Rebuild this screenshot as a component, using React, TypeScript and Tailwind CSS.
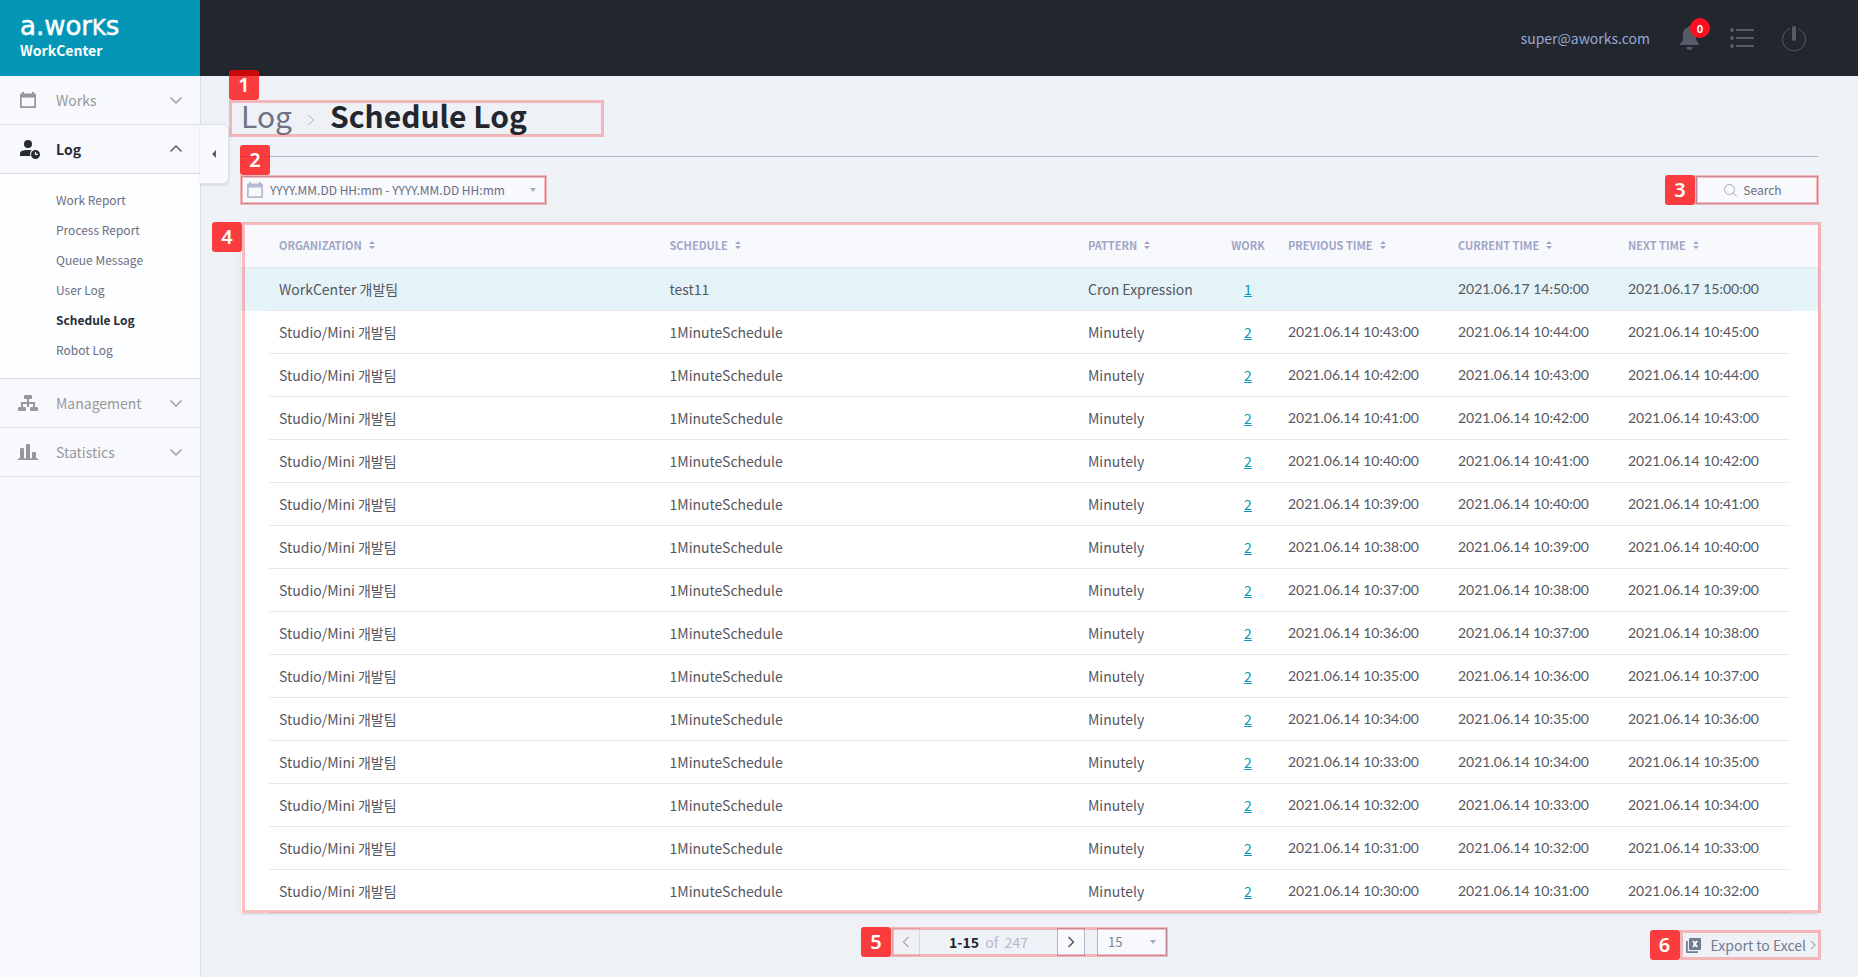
import React, { useState } from 'react';
import clsx from 'clsx';

interface ScheduleLog {
  organization: string;
  schedule: string;
  pattern: string;
  work: number;
  previous: string;
  current: string;
  next: string;
}

const minuteTime = (minute: number) => `2021.06.14 10:${minute}:00`;

const LOGS: ScheduleLog[] = [
  {
    organization: 'WorkCenter 개발팀',
    schedule: 'test11',
    pattern: 'Cron Expression',
    work: 1,
    previous: '',
    current: '2021.06.17 14:50:00',
    next: '2021.06.17 15:00:00',
  },
  ...Array.from({ length: 14 }, (_, i) => ({
    organization: 'Studio/Mini 개발팀',
    schedule: '1MinuteSchedule',
    pattern: 'Minutely',
    work: 2,
    previous: minuteTime(43 - i),
    current: minuteTime(44 - i),
    next: minuteTime(45 - i),
  })),
];

const LOG_PAGES = ['Work Report', 'Process Report', 'Queue Message', 'User Log', 'Schedule Log', 'Robot Log'];

const COLUMNS = [
  { label: 'ORGANIZATION', sortable: true },
  { label: 'SCHEDULE', sortable: true },
  { label: 'PATTERN', sortable: true },
  { label: 'WORK', sortable: false },
  { label: 'PREVIOUS TIME', sortable: true },
  { label: 'CURRENT TIME', sortable: true },
  { label: 'NEXT TIME', sortable: true },
];

const CalendarIcon = ({ className }: { className?: string }) => (
  <svg viewBox="0 0 16 16" className={className} fill="currentColor" aria-hidden="true">
    <path fillRule="evenodd" d="M2 0h2v1.5h8V0h2v1.5h1a1 1 0 0 1 1 1V15a1 1 0 0 1-1 1H1a1 1 0 0 1-1-1V2.500a1 1 0 0 1 1-1h1zM1.700 5.500v8.800h12.600V5.500z" />
  </svg>
);

const UserClockIcon = () => (
  <svg viewBox="0 0 20 19" className="w-5 h-[19px]" fill="currentColor" aria-hidden="true">
    <circle cx="8" cy="4" r="4" />
    <path d="M0 16v-2.500C0 11 3 10 8 10c1.500 0 2.800.1 3.800.3A5.500 5.500 0 0 0 10.400 16z" />
    <path fillRule="evenodd" d="M15.500 10a4.500 4.500 0 1 1 0 9 4.500 4.500 0 0 1 0-9zm-.6 2v3h3v-1.200h-1.800V12z" />
  </svg>
);

const SitemapIcon = () => (
  <svg viewBox="0 0 20 16" className="w-5 h-4" fill="currentColor" aria-hidden="true">
    <rect x="6" y="0" width="8" height="4" rx="1" />
    <path d="M9 4h2v3h6v5h-2V9h-4v3H9V9H5v3H3V7h6z" />
    <rect x="0" y="12" width="8" height="4" rx="1" />
    <rect x="12" y="12" width="8" height="4" rx="1" />
  </svg>
);

const BarsIcon = () => (
  <svg viewBox="0 0 20 16" className="w-5 h-4" fill="currentColor" aria-hidden="true">
    <path d="M0 14.300h20V16H0z" />
    <rect x="2" y="4" width="4" height="11" rx="1" />
    <rect x="8" y="0" width="4" height="15" rx="1" />
    <rect x="14" y="8" width="4" height="7" rx="1" />
  </svg>
);

const Chevron = ({ d, className }: { d: string; className?: string }) => (
  <svg viewBox="0 0 12 12" className={className} fill="none" stroke="currentColor" aria-hidden="true">
    <path d={d} />
  </svg>
);

const DOWN = 'M0.500 3.500L6 9l5.500-5.500';
const UP = 'M0.500 8.500L6 3l5.500 5.500';
const LEFT = 'M8.500 1L3.500 6l5 5';
const RIGHT = 'M3.500 1l5 5-5 5';

const CaretDown = ({ className }: { className?: string }) => (
  <svg viewBox="0 0 6 4" className={clsx('w-1.5 h-1 text-[#9fabcf]', className)} fill="currentColor" aria-hidden="true">
    <path d="M0 0h6L3 4z" />
  </svg>
);

const SortIcon = () => (
  <svg viewBox="0 0 6 8" className="w-1.5 h-2" fill="currentColor" aria-hidden="true">
    <path d="M0 3l3-3 3 3zM0 5l3 3 3-3z" />
  </svg>
);

interface CalloutProps {
  number: number;
  side: 'top' | 'left';
  className: string;
}

// Numbered guide frame laid over a part of the page
const Callout: React.FC<CalloutProps> = ({ number, side, className }) => (
  <div className={clsx('absolute z-20 border-3 border-[#ff0000]/25 pointer-events-none', className)}>
    <span
      className={clsx(
        'absolute flex items-center justify-center w-[30px] h-[30px] rounded-[3px] bg-[#ff0000]/75 text-white text-xl leading-6 font-semibold font-["Noto_Sans",sans-serif]',
        side === 'top' ? 'bottom-full mb-[3px] -left-[3px]' : 'right-full mr-[3px] -top-[3px]'
      )}
    >
      {number}
    </span>
  </div>
);

interface MenuItemProps {
  icon: React.ReactNode;
  label: string;
  open?: boolean;
}

const MenuItem: React.FC<MenuItemProps> = ({ icon, label, open = false }) => (
  <button
    type="button"
    aria-expanded={open}
    className={clsx(
      'flex items-center w-full h-[49px] px-[18px] border-b border-[#d9dbe5] text-sm leading-5',
      open ? 'text-[#282b35] font-bold' : 'text-[#96979c]'
    )}
  >
    <span className="w-[38px]">{icon}</span>
    <span className="flex-1 text-left">{label}</span>
    <Chevron d={open ? UP : DOWN} className={clsx('w-3 h-3 stroke-[1.5]', open ? 'text-[#55586a]' : 'text-[#9a9db0]')} />
  </button>
);

const Sidebar = () => (
  <aside className="relative w-[201px] shrink-0 bg-[#f8f9fd] border-r border-[#d9dbe5]">
    <nav>
      <MenuItem icon={<CalendarIcon className="w-4 h-4 ml-0.5" />} label="Works" />
      <MenuItem icon={<span className="block ml-0.5"><UserClockIcon /></span>} label="Log" open />
      <ul className="pt-[11px] pb-[13px] bg-[#fdfeff] border-b border-[#d9dbe5]">
        {LOG_PAGES.map((page) => (
          <li key={page}>
            <a
              href="#"
              className={clsx(
                'flex items-center h-[30px] pl-14 text-xs',
                page === 'Schedule Log' ? 'text-[#282b35] font-bold' : 'text-[#6a6e80]'
              )}
            >
              {page}
            </a>
          </li>
        ))}
      </ul>
      <MenuItem icon={<SitemapIcon />} label="Management" />
      <MenuItem icon={<BarsIcon />} label="Statistics" />
    </nav>
    <button
      type="button"
      aria-label="Collapse menu"
      className="absolute left-full top-12 flex items-center justify-center w-[29px] h-[60px] rounded-r-md border border-l-0 border-[#dfe1ea] bg-[#f8f9fd] shadow-sm text-[#5a5d70]"
    >
      <svg viewBox="0 0 4 8" className="w-1 h-2" fill="currentColor" aria-hidden="true">
        <path d="M4 0v8L0 4z" />
      </svg>
    </button>
  </aside>
);

const Header = () => (
  <header className="flex h-19 bg-[#22262f]">
    <div className="w-[200px] pl-5 pt-3 bg-[#0396b7] text-white">
      <div className="h-7 text-[26px] leading-7 font-['DejaVu_Sans',sans-serif] [-webkit-text-stroke:0.5px]">
        a.wor<span className="text-[30px] leading-6 [font-variant-caps:small-caps]">k</span>s
      </div>
      <div className="text-sm leading-5 font-bold">WorkCenter</div>
    </div>
    <div className="flex flex-1 items-center justify-end pr-[52px] text-[#565a69]">
      <span className="mr-[30px] text-sm leading-5 text-[#99a6cf]">super@aworks.com</span>
      <button type="button" aria-label="Notifications" className="relative mr-[31px]">
        <svg viewBox="0 0 19 24" className="w-[19px] h-6" fill="currentColor" aria-hidden="true">
          <path d="M9.500 0C8.500 0 8 .700 8 1.600 4.800 2.400 2.800 5 2.800 8.500V14L0 18v1h19v-1l-2.800-4V8.500c0-3.500-2-6.100-5.200-6.900C11 .700 10.500 0 9.500 0zM6.500 21a3 3 0 0 0 6 0z" />
        </svg>
        <span className="absolute -top-2 left-2.5 flex items-center justify-center w-5 h-5 rounded-full bg-[#ff0f1e] text-white text-[11px] leading-4 font-bold">
          0
        </span>
      </button>
      <button type="button" aria-label="Task list" className="mr-7">
        <svg viewBox="0 0 24 20" className="w-6 h-5" fill="currentColor" aria-hidden="true">
          <circle cx="2" cy="2" r="2" />
          <circle cx="2" cy="10" r="2" />
          <circle cx="2" cy="18" r="2" />
          <path d="M6 1h18v2H6zM6 9h18v2H6zM6 17h18v2H6z" />
        </svg>
      </button>
      <button type="button" aria-label="Sign out">
        <svg viewBox="0 0 24 25" className="w-6 h-[25px]" fill="none" stroke="currentColor" strokeLinecap="round" aria-hidden="true">
          <path d="M7.500 2.700a11.500 11.500 0 1 0 9 0" />
          <path d="M12 2v11" strokeWidth="4" />
        </svg>
      </button>
    </div>
  </header>
);

const LogTable = () => (
  <div className="relative mt-[19px] bg-white shadow-sm">
    <table className="w-full table-fixed border-separate border-spacing-0 text-left text-sm leading-5 text-[#55575f]">
      <colgroup>
        <col />
        <col />
        <col className="w-[140px]" />
        <col className="w-[60px]" />
        <col className="w-[170px]" />
        <col className="w-[170px]" />
        <col className="w-[200px]" />
      </colgroup>
      <thead className="bg-[#f8f9fd] text-[11px] text-[#9fa6c8]">
        <tr>
          {COLUMNS.map(({ label, sortable }) => (
            <th key={label} scope="col" className="h-[45px] px-2.5 first:pl-[38px] border-b border-[#e4e6ee] font-bold">
              {sortable ? (
                <button type="button" className="flex items-center gap-[7px]">
                  {label}
                  <SortIcon />
                </button>
              ) : (
                <span className="block text-center">{label}</span>
              )}
            </th>
          ))}
        </tr>
      </thead>
      <tbody>
        {LOGS.map((log, index) => (
          <tr key={log.current} className={index === 0 ? 'bg-[#e4f3f7]' : undefined}>
            {[log.organization, log.schedule, log.pattern].map((text) => (
              <td key={text} className="first:pl-7">
                <div className="flex items-center h-[43px] px-2.5 border-b border-[#e8e9ed]">{text}</div>
              </td>
            ))}
            <td>
              <div className="flex items-center justify-center h-[43px] border-b border-[#e8e9ed]">
                <a href="#" className="text-[#0396b7] underline">{log.work}</a>
              </div>
            </td>
            {[log.previous, log.current, log.next].map((time, i) => (
              <td key={i} className="last:pr-7">
                <div className="flex items-center h-[43px] px-2.5 border-b border-[#e8e9ed] font-[Lato,sans-serif]">{time}</div>
              </td>
            ))}
          </tr>
        ))}
      </tbody>
    </table>
    <Callout number={4} side="left" className="-top-px bottom-0 left-px -right-[3px]" />
  </div>
);

function App() {
  const [pageSize, setPageSize] = useState('15');

  return (
    <div className="flex flex-col min-h-screen bg-[#eef1f6] font-['Noto_Sans_CJK_KR',sans-serif]">
      <Header />
      <div className="flex flex-1">
        <Sidebar />
        <main className="flex-1 min-w-0 px-10 pt-6">
          <div className="relative flex items-start h-14 text-[30px] leading-[31px]">
            <a href="#" className="text-[#6f7285]">Log</a>
            <Chevron d={RIGHT} className="w-3 h-10 mx-[13px] text-[#a9adbd]" />
            <h1 className="font-bold text-[#22262f]">Schedule Log</h1>
            <Callout number={1} side="top" className="top-0 -left-3 w-[375px] h-[37px]" />
          </div>
          <hr className="border-[#b0b5c8]" />

          <div className="flex items-center justify-between mt-[19px]">
            <div className="relative">
              <button
                type="button"
                className="flex items-center w-[305px] h-7 px-[5px] border border-[#b0b5c8] bg-[#f8f9fd] text-xs text-[#6a6e80]"
              >
                <CalendarIcon className="w-4 h-4 mr-[7px] text-[#b5b9cd]" />
                YYYY.MM.DD HH:mm - YYYY.MM.DD HH:mm
                <CaretDown className="ml-auto mr-1" />
              </button>
              <Callout number={2} side="top" className="-inset-px" />
            </div>
            <div className="relative">
              <button
                type="button"
                className="flex items-center justify-center gap-1.5 w-[122px] h-7 pr-2 border border-[#b0b5c8] bg-[#f8f9fd] text-xs text-[#6a6e80]"
              >
                <svg viewBox="0 0 13 13" className="w-[13px] h-[13px] text-[#a5a9bd]" fill="none" stroke="currentColor" aria-hidden="true">
                  <circle cx="5.500" cy="5.500" r="5" />
                  <path d="M9 9l3.700 3.700" />
                </svg>
                Search
              </button>
              <Callout number={3} side="left" className="-inset-px" />
            </div>
          </div>

          <LogTable />

          <div className="grid grid-cols-[1fr_auto_1fr] items-start mt-[15px] pb-[15px]">
            <div className="relative col-start-2 flex items-center">
              <button
                type="button"
                disabled
                aria-label="Previous page"
                className="flex items-center justify-center w-7 h-7 border border-[#d5d8e2] bg-[#f0f1f5] text-[#b0b2ba]"
              >
                <Chevron d={LEFT} className="w-3 h-3 stroke-[1.5]" />
              </button>
              <p className="w-[137px] text-center text-sm leading-5 text-[#b5b9cb]">
                <strong className="font-bold text-[#22262f]">1-15</strong>&nbsp; of &nbsp;247
              </p>
              <button
                type="button"
                aria-label="Next page"
                className="flex items-center justify-center w-7 h-7 border border-[#b0b5c8] bg-[#f8f9fd] text-[#55575f]"
              >
                <Chevron d={RIGHT} className="w-3 h-3 stroke-[1.5]" />
              </button>
              <div className="relative ml-3">
                <select
                  aria-label="Rows per page"
                  value={pageSize}
                  onChange={(e) => setPageSize(e.target.value)}
                  className="block w-[70px] h-7 pl-2.5 appearance-none rounded-none border border-[#b0b5c8] bg-[#f8f9fd] text-[13px] text-[#7d8194]"
                >
                  <option value="15">15</option>
                  <option value="30">30</option>
                  <option value="50">50</option>
                </select>
                <CaretDown className="absolute right-[11px] top-3 pointer-events-none" />
              </div>
              <Callout number={5} side="left" className="-inset-px" />
            </div>
            <div className="relative justify-self-end">
              <button type="button" className="flex items-center h-[34px] text-sm leading-5 text-[#6f7c91]">
                <svg viewBox="0 0 15 15" className="w-[15px] h-[15px] mr-2.5" aria-hidden="true">
                  <path d="M0 3h1.800v10.200H12V15H1a1 1 0 0 1-1-1z" fill="currentColor" />
                  <rect x="3" y="0" width="12" height="12" rx="1" fill="currentColor" />
                  <path d="M7 3l4 6M11 3L7 9" stroke="#fff" strokeWidth="1.800" />
                </svg>
                Export to Excel
                <Chevron d={RIGHT} className="w-2.5 h-2.5 ml-0.5 stroke-[1.5] text-[#a9adbd]" />
              </button>
              <Callout number={6} side="left" className="inset-y-0.5 -left-1.5 -right-[3px]" />
            </div>
          </div>
        </main>
      </div>
    </div>
  );
}

export default App;
